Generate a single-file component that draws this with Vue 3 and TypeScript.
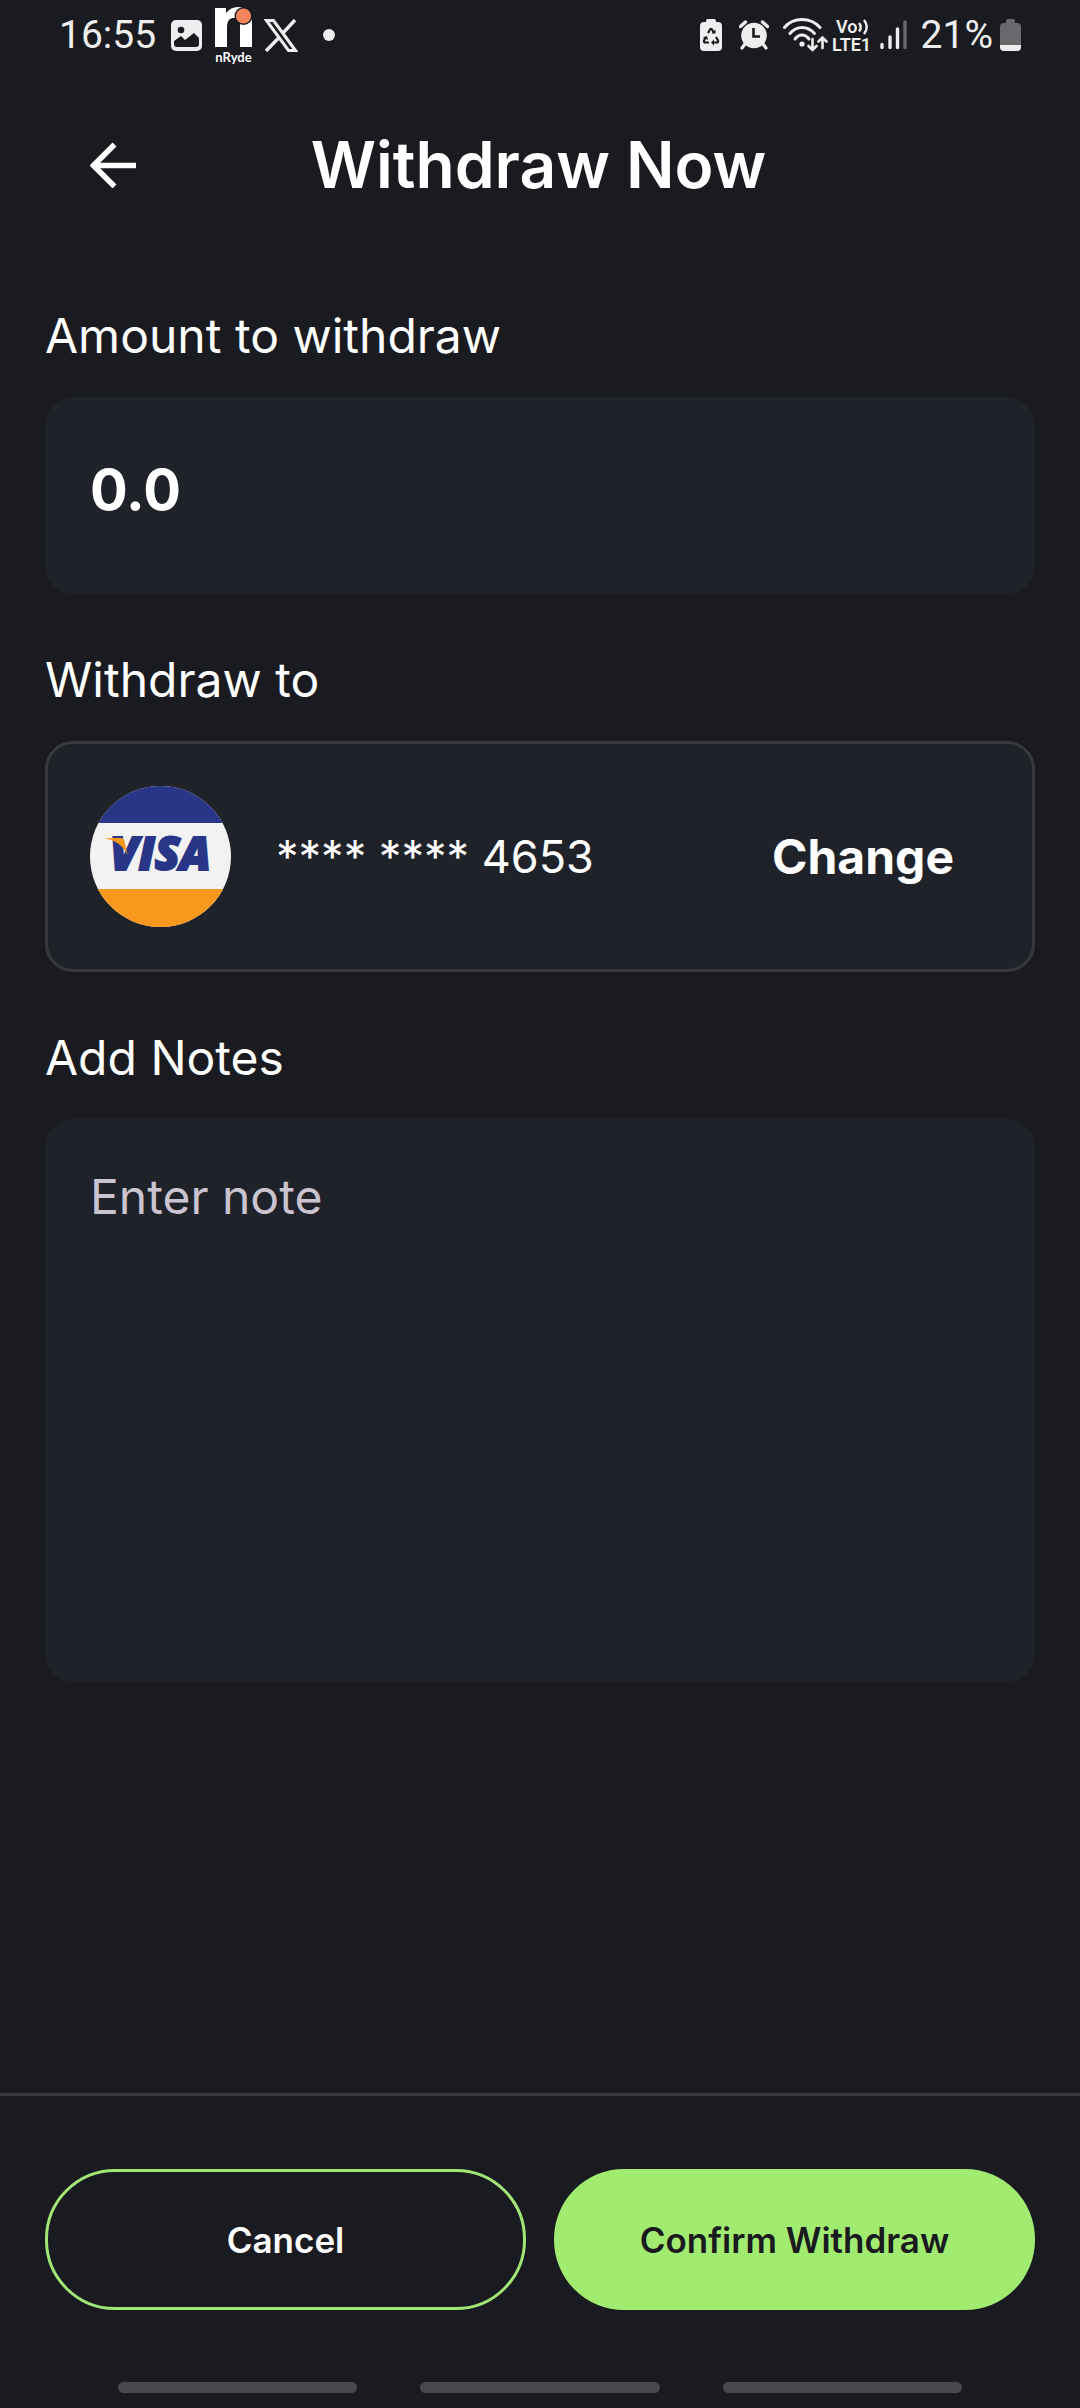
<script setup lang="ts">
import { ref } from 'vue'

const amount = ref<string>('0.0')
const note = ref<string>('')
const cardNumber = '**** **** 4653'
const navHints: string[] = ['recents', 'home', 'back']
</script>

<template>
  <div class="screen">
    <div class="status-bar">
      <div class="status-group">
        <span class="status-text">16:55</span>
        <svg class="icon-photo" width="31" height="31" viewBox="0 0 31 31" aria-hidden="true">
          <rect width="31" height="31" rx="5" fill="#eee" />
          <circle cx="10" cy="10" r="3.3" fill="#1a1b20" />
          <path d="M3 24v-3l7-5 4 4 9-7 5 5v6a3 3 0 0 1-3 3H6a3 3 0 0 1-3-3z" fill="#1a1b20" />
        </svg>
        <svg class="icon-ryde" width="37" height="58" viewBox="0 0 37 58" aria-label="nRyde">
          <path d="M0 2h11v5c3-4 7-6 12-6 9 0 14 7 14 15v25H25V18c0-4-2-6-5-6h-2c-4 0-6 4-6 9v20H0z" fill="#fff" />
          <circle cx="28.500" cy="10" r="9" fill="#1a1b20" />
          <circle cx="28.500" cy="10" r="7.600" fill="#f4845a" />
          <text x="18.500" y="56" text-anchor="middle" class="ryde-name">nRyde</text>
        </svg>
        <svg class="icon-x" width="34" height="33" viewBox="0 0 34 33" aria-hidden="true">
          <path d="M2.500 1.500h7l22 30h-7z" fill="none" stroke="#eee" stroke-width="3" />
          <path d="M31 1 19 14M15 18.500 2 32" fill="none" stroke="#eee" stroke-width="3.400" />
        </svg>
        <span class="dot"></span>
      </div>

      <div class="status-group">
        <svg width="22" height="32" viewBox="0 0 22 32" aria-hidden="true">
          <path d="M6 3V2a2 2 0 0 1 2-2h6a2 2 0 0 1 2 2v1h2a4 4 0 0 1 4 4v21a4 4 0 0 1-4 4H4a4 4 0 0 1-4-4V7a4 4 0 0 1 4-4z" fill="#eee" />
          <path d="M8 14l2-3.500q1-1.500 2 0l2 3.500M16 18l2 3.500q.6 2-1.500 2H13M9 23.500H5.500q-2 0-1.500-2L6 18" fill="none" stroke="#1a1b20" stroke-width="2.200" />
          <path d="M11.500 14.500h4v-4zM14 20.500v6l-3-3zM3 18.500l4-1.500 1 4z" fill="#1a1b20" />
        </svg>
        <svg class="icon-alarm" width="30" height="30" viewBox="0 0 30 30" aria-hidden="true">
          <circle cx="15" cy="15.500" r="12.800" fill="#eee" />
          <path d="M1.500 6.500 6.500 2M28.500 6.500 23.500 2" stroke="#eee" stroke-width="3.400" stroke-linecap="round" />
          <path d="M6 24l-3 4M24 24l3 4" stroke="#eee" stroke-width="3.200" stroke-linecap="round" />
          <path d="M14.500 8v8.500H21" fill="none" stroke="#1a1b20" stroke-width="2.600" />
        </svg>
        <svg class="icon-wifi" width="45" height="34" viewBox="0 0 45 34" aria-hidden="true">
          <g fill="none" stroke="#eee" stroke-width="3" stroke-linecap="round">
            <path d="M1.500 9.500Q8 1.500 19 1.500T37 9.500" />
            <path d="M7 15.500Q12 9.500 19 9.500T31.500 15.500" />
            <path d="M12 21q3-4 7-4t7 4" />
          </g>
          <circle cx="19" cy="26" r="2.600" fill="#eee" />
          <path d="M29.500 21v10.500M25.500 28l4 4 4-4M39.500 30V20M35.500 23.500l4-4 4 4" fill="none" stroke="#eee" stroke-width="2.600" stroke-linecap="round" />
        </svg>
        <svg class="icon-volte" width="38" height="34" viewBox="0 0 38 34" aria-label="VoLTE">
          <text x="3" y="15" class="volte">Vo</text>
          <text x="-1" y="33" class="volte">LTE1</text>
          <path d="M26 5q3.500 4 0 8.500M31 2q5.500 7 0 14" fill="none" stroke="#eee" stroke-width="2.400" />
        </svg>
        <svg class="icon-signal" width="27" height="30" viewBox="0 0 27 30" aria-hidden="true">
          <g stroke-width="3.400" stroke-linecap="round" stroke="#eee">
            <path d="M2 24.500v3M10 17v10.500M17.500 9v18.500" />
            <path d="M25 2v25.500" stroke="#68696d" />
          </g>
        </svg>
        <span class="status-text percent">21%</span>
        <svg class="icon-battery" width="21" height="32" viewBox="0 0 21 32" aria-hidden="true">
          <path d="M6 4V2a2 2 0 0 1 2-2h5a2 2 0 0 1 2 2v2h2a4 4 0 0 1 4 4v18H0V8a4 4 0 0 1 4-4z" fill="#68696d" />
          <path d="M0 26h21v2a4 4 0 0 1-4 4H4a4 4 0 0 1-4-4z" fill="#eee" />
        </svg>
      </div>
    </div>

    <header class="header">
      <button type="button" class="back" aria-label="Back">
        <svg width="46" height="46" viewBox="0 0 46 46" fill="none" stroke="#fff" stroke-width="5.500">
          <path d="M46 23.500H5M24.500 2.500l-21 21 21 21" />
        </svg>
      </button>
      <h1 class="title">Withdraw Now</h1>
    </header>

    <main class="form">
      <section class="field">
        <label class="label" for="amount">Amount to withdraw</label>
        <input id="amount" v-model="amount" class="amount" type="text" inputmode="decimal" />
      </section>

      <section class="field">
        <h2 class="label">Withdraw to</h2>
        <div class="card">
          <svg class="visa" width="141" height="141" viewBox="0 0 141 141" aria-label="VISA">
            <defs>
              <clipPath id="disc"><circle cx="70.500" cy="70.500" r="70.500" /></clipPath>
            </defs>
            <g clip-path="url(#disc)">
              <rect width="141" height="141" fill="#f2f2f2" />
              <rect width="141" height="37" fill="#293688" />
              <rect y="103" width="141" height="38" fill="#f8981d" />
            </g>
            <text x="20" y="84" class="visa-name">VISA</text>
            <path d="M14 52h17q3 0 3.500 3l3 14Q31 55 14 52z" fill="#f8981d" />
          </svg>
          <span class="number">{{ cardNumber }}</span>
          <button type="button" class="change">Change</button>
        </div>
      </section>

      <section class="field">
        <label class="label" for="note">Add Notes</label>
        <textarea id="note" v-model="note" class="note" placeholder="Enter note"></textarea>
      </section>
    </main>

    <footer class="footer">
      <div class="actions">
        <button type="button" class="action cancel">Cancel</button>
        <button type="button" class="action confirm">Confirm Withdraw</button>
      </div>
      <div class="nav-hints">
        <span v-for="hint in navHints" :key="hint" class="hint"></span>
      </div>
    </footer>
  </div>
</template>

<style>
body {
  margin: 0;
  background: #1a1b20;
}
</style>

<style scoped>
.screen {
  display: flex;
  flex-direction: column;
  min-height: 100vh;
  background: #1a1b20;
  color: #fff;
  font-family: Inter, "Liberation Sans", sans-serif;
}

.screen *,
.screen {
  box-sizing: border-box;
}

button,
input,
textarea {
  margin: 0;
  padding: 0;
  border: 0;
  background: none;
  color: inherit;
  font-family: inherit;
  outline: 0;
}

svg {
  display: block;
  flex: none;
}

.status-bar {
  display: flex;
  justify-content: space-between;
  height: 70px;
  padding: 0 59px;
}

.status-group {
  display: flex;
  align-items: center;
}

.status-text {
  color: #eee;
  font: 400 39px/70px Roboto, sans-serif;
}

.icon-photo {
  margin-left: 15px;
}

.icon-ryde {
  margin-left: 13px;
}

.ryde-name {
  fill: #fff;
  font: 700 13px Lato, sans-serif;
}

.icon-x {
  margin-left: 12px;
}

.dot {
  width: 12px;
  height: 12px;
  margin-left: 25px;
  border-radius: 50%;
  background: #eee;
}

.icon-alarm {
  margin-left: 17px;
}

.icon-wifi {
  margin-left: 14px;
}

.icon-volte {
  margin-left: 5px;
  overflow: visible;
}

.volte {
  fill: #eee;
  font: 600 18px Roboto, sans-serif;
}

.icon-signal {
  margin-left: 9px;
}

.percent {
  margin-left: 14px;
}

.icon-battery {
  margin-left: 7px;
}

.header {
  display: grid;
  grid-template-columns: 1fr auto 1fr;
  align-items: center;
  height: 190px;
  padding: 0 46px 0 43px;
}

.back {
  justify-self: start;
  margin-left: 47px;
}

.title {
  margin: 0;
  font-size: 64px;
  font-weight: 600;
  line-height: 76px;
}

.form {
  display: flex;
  flex-direction: column;
  gap: 52px;
  padding: 42px 45px 52px;
}

.field {
  display: flex;
  flex-direction: column;
  gap: 27px;
}

.label {
  margin: 0;
  font-size: 48px;
  font-weight: 400;
  line-height: 68px;
}

.amount,
.note {
  width: 100%;
  border-radius: 28px;
  background: #20222a;
}

.amount {
  height: 197px;
  padding: 0 45px 12px;
  font-size: 56px;
  font-weight: 700;
}

.card {
  display: flex;
  align-items: center;
  gap: 45px;
  padding: 42px 78px 42px 42px;
  border: 3px solid #38393d;
  border-radius: 28px;
  background: #20222a;
}

.visa-name {
  fill: #293688;
  stroke: #293688;
  stroke-width: 2px;
  font: italic 800 46px "Open Sans", sans-serif;
}

.number {
  font-size: 45px;
  line-height: 68px;
}

.change {
  margin-left: auto;
  font-size: 48px;
  font-weight: 700;
  line-height: 68px;
}

.note {
  display: block;
  height: 563px;
  padding: 44px 45px;
  resize: none;
  font-size: 48px;
  line-height: 68px;
}

.note::placeholder {
  color: #cac4d0;
  opacity: 1;
}

.footer {
  margin-top: auto;
  border-top: 3px solid #38393d;
}

.actions {
  display: grid;
  grid-template-columns: 1fr 1fr;
  gap: 28px;
  padding: 73px 45px 72px;
}

.action {
  height: 141px;
  border-radius: 70px;
  font-size: 35px;
  font-weight: 600;
}

.cancel {
  border: 3px solid #a2e577;
}

.confirm {
  background: #a2eb71;
  color: #1a1b20;
}

.nav-hints {
  display: flex;
  gap: 63px;
  padding: 0 118px 15px;
}

.hint {
  flex: 1 1 0;
  height: 11px;
  border-radius: 6px;
  background: #48494d;
}
</style>
